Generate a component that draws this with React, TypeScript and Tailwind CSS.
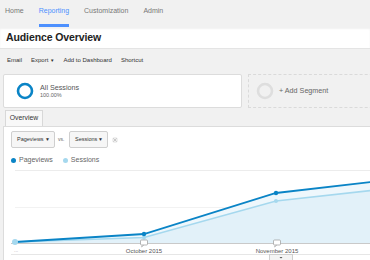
import { X } from "lucide-react";

const navItems = ["Home", "Reporting", "Customization", "Admin"];

function Ring({ color }: { color: string }) {
  return (
    <svg width="18" height="18" viewBox="0 0 18 18">
      <circle cx="9" cy="9" r="7" fill="none" stroke={color} strokeWidth="2.6" />
    </svg>
  );
}

function Select({ label, w }: { label: string; w: string }) {
  return (
    <div
      className={`${w} h-[17px] flex items-center justify-between pl-[5px] pr-[4px] bg-[#f6f6f6] border border-[#cfcfcf] rounded-[2px] text-[5.5px] text-[#333]`}
    >
      <span>{label}</span>
      <span className="text-[5px]">▼</span>
    </div>
  );
}

function Chart() {
  const pv = [
    [11, 72],
    [140, 64],
    [272, 23],
    [367, 12],
  ];
  const s = [
    [11, 72],
    [140, 67.5],
    [272, 31],
    [367, 20.5],
  ];
  const line = (p: number[][]) => p.map((q) => q.join(",")).join(" ");
  const area = (p: number[][]) => `${line(p)} 367,73 11,73`;

  return (
    <svg width="367" height="90" viewBox="0 0 367 90" className="block">
      <line x1="11" y1="0.5" x2="367" y2="0.5" stroke="#ececec" />
      <line x1="11" y1="37.5" x2="367" y2="37.5" stroke="#f2f2f2" />
      <polygon points={area(pv)} fill="#eef7fc" />
      <polygon points={area(s)} fill="#e2f1f9" />
      <line x1="7" y1="73.5" x2="367" y2="73.5" stroke="#c9c9c9" />
      <line x1="7" y1="84.5" x2="367" y2="84.5" stroke="#e6e6e6" />
      <polyline points={line(s)} fill="none" stroke="#a5d8ee" strokeWidth="1.6" />
      <polyline points={line(pv)} fill="none" stroke="#0a84c6" strokeWidth="1.8" />
      <circle cx="140" cy="67.5" r="2" fill="#a5d8ee" />
      <circle cx="272" cy="31" r="2" fill="#a5d8ee" />
      <circle cx="140" cy="64" r="2.2" fill="#0a84c6" />
      <circle cx="272" cy="23" r="2.2" fill="#0a84c6" />
      <circle cx="11" cy="72" r="3" fill="#a5d8ee" />
      {[140, 273].map((x) => (
        <g key={x}>
          <rect x={x - 3.5} y="70" width="7" height="5" rx="1" fill="#fff" stroke="#9a9a9a" strokeWidth="0.7" />
          <path d={`M${x - 1.5} 75 L${x - 2.5} 77 L${x} 75`} fill="#fff" stroke="#9a9a9a" strokeWidth="0.6" />
        </g>
      ))}
      <text x="140" y="82.5" fontSize="6" fill="#555" textAnchor="middle" fontFamily="Liberation Sans, Arial, sans-serif">
        October 2015
      </text>
      <text x="273" y="82.5" fontSize="6" fill="#555" textAnchor="middle" fontFamily="Liberation Sans, Arial, sans-serif">
        November 2015
      </text>
      <text x="10" y="81.5" fontSize="5" fill="#aaa" fontFamily="Liberation Sans, Arial, sans-serif">
        ...
      </text>
      <rect x="265.5" y="84.5" width="23" height="6" fill="#f4f4f4" stroke="#cfcfcf" />
      <path d="M275.5 87 L278.5 87 L277 88.6 Z" fill="#555" />
    </svg>
  );
}

export default function App() {
  return (
    <div className="w-[370px] h-[260px] overflow-hidden flex flex-col bg-[#f1f1f1] font-['Liberation_Sans',Arial,sans-serif]">
      {/* nav */}
      <div className="h-[27px] flex gap-[15px] pl-[5px] shrink-0">
        {navItems.map((n) => (
          <div
            key={n}
            className={`h-full pt-[6px] leading-[9px] text-[7px] border-b-[3px] ${
              n === "Reporting" ? "border-[#4d90fe] text-[#4d90fe]" : "border-transparent text-[#777]"
            }`}
          >
            {n}
          </div>
        ))}
      </div>

      {/* title */}
      <div className="h-[22px] shrink-0 flex items-center px-[6px] bg-white border-b border-[#e4e4e4] shadow-[inset_0_2px_2px_rgba(0,0,0,0.06)]">
        <h1 className="text-[10.5px] font-bold text-[#222] tracking-[-0.1px]">Audience Overview</h1>
      </div>

      {/* toolbar */}
      <div className="h-[23px] shrink-0 flex items-center gap-[9px] pl-[7px] text-[6px] text-[#333]">
        <span>Email</span>
        <span>
          Export <span className="text-[4.5px]">▼</span>
        </span>
        <span>Add to Dashboard</span>
        <span>Shortcut</span>
      </div>

      {/* segments */}
      <div className="flex gap-[6px] pl-[3px] pt-[2px] shrink-0">
        <div className="w-[239px] h-[34px] shrink-0 bg-white border border-[#dcdcdc] rounded-[2px] flex items-center pl-[12px] gap-[6px]">
          <Ring color="#0a84c6" />
          <div className="flex flex-col">
            <span className="text-[7.2px] leading-[9px] text-[#555]">All Sessions</span>
            <span className="text-[5.5px] leading-[7px] text-[#666]">100.00%</span>
          </div>
        </div>
        <div className="w-[140px] h-[34px] shrink-0 border border-dashed border-[#dadada] flex items-center pl-[7px] gap-[5px]">
          <Ring color="#dedede" />
          <span className="text-[7.2px] text-[#666]">+ Add Segment</span>
        </div>
      </div>

      {/* tabs */}
      <div className="pl-[5px] pt-[2px] shrink-0 flex">
        <div className="w-[38px] h-[16px] bg-[#f8f8f8] border border-b-0 border-[#d8d8d8] flex items-center justify-center text-[6.8px] text-[#333]">
          Overview
        </div>
      </div>

      {/* panel */}
      <div className="flex-1 ml-[3px] bg-white border-t border-l border-[#dcdcdc] flex flex-col">
        <div className="flex items-center pt-[4px] pl-[7px] gap-[3px]">
          <Select label="Pageviews" w="w-[44px]" />
          <span className="text-[5px] text-[#666] w-[8px]">vs.</span>
          <Select label="Sessions" w="w-[39px]" />
          <X size={6} strokeWidth={3} className="ml-[1px] text-[#bbb] bg-[#eee] rounded-full" />
        </div>
        <div className="flex items-center h-[10px] mt-[7px] pl-[7px] text-[7px] text-[#666]">
          <span className="w-[5px] h-[5px] rounded-full bg-[#0a84c6] mr-[3px]" />
          <span>Pageviews</span>
          <span className="w-[5px] h-[5px] rounded-full bg-[#a5d8ee] ml-[10px] mr-[3px]" />
          <span>Sessions</span>
        </div>
        <div className="mt-[5px]">
          <Chart />
        </div>
      </div>
    </div>
  );
}
